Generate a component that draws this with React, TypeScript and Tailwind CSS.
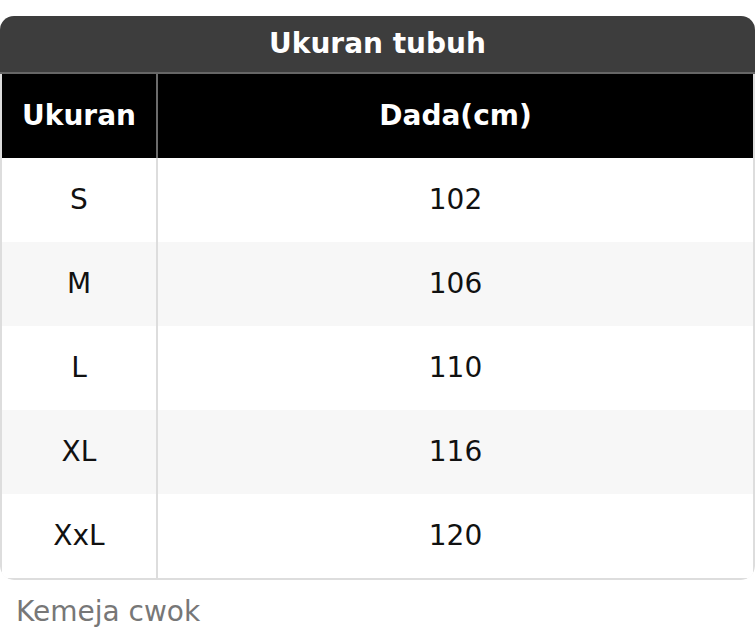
const rows = [
  { size: 'S', chest: '102' },
  { size: 'M', chest: '106' },
  { size: 'L', chest: '110' },
  { size: 'XL', chest: '116' },
  { size: 'XxL', chest: '120' },
]

export default function App() {
  return (
    <div className="min-h-screen bg-white pt-4 font-['DejaVu_Sans',sans-serif] text-[28px] leading-[1.5]">
      <div className="w-[755px] overflow-hidden rounded-[14px]">
        {/* Judul tabel */}
        <div className="flex h-[58px] items-center justify-center border-b-2 border-[#666] bg-[#3d3d3d] font-bold text-white">
          Ukuran tubuh
        </div>

        <div className="rounded-b-[14px] border-x-2 border-b-2 border-[#ddd]">
          {/* Kepala kolom */}
          <div className="grid h-[84px] grid-cols-[156px_1fr] bg-black font-bold text-white">
            <div className="flex items-center justify-center border-r-2 border-[#6b6b6b]">
              Ukuran
            </div>
            <div className="flex items-center justify-center">Dada(cm)</div>
          </div>

          {rows.map((r, i) => (
            <div
              key={r.size}
              className={
                'grid h-[84px] grid-cols-[156px_1fr] text-[#111] ' +
                (i % 2 === 1 ? 'bg-[#f7f7f7]' : 'bg-white')
              }
            >
              <div className="flex items-center justify-center border-r-2 border-[#ddd]">
                {r.size}
              </div>
              <div className="flex items-center justify-center">{r.chest}</div>
            </div>
          ))}
        </div>
      </div>

      <p className="mt-[11px] pl-[16px] text-[#777]">Kemeja cwok</p>
    </div>
  )
}
